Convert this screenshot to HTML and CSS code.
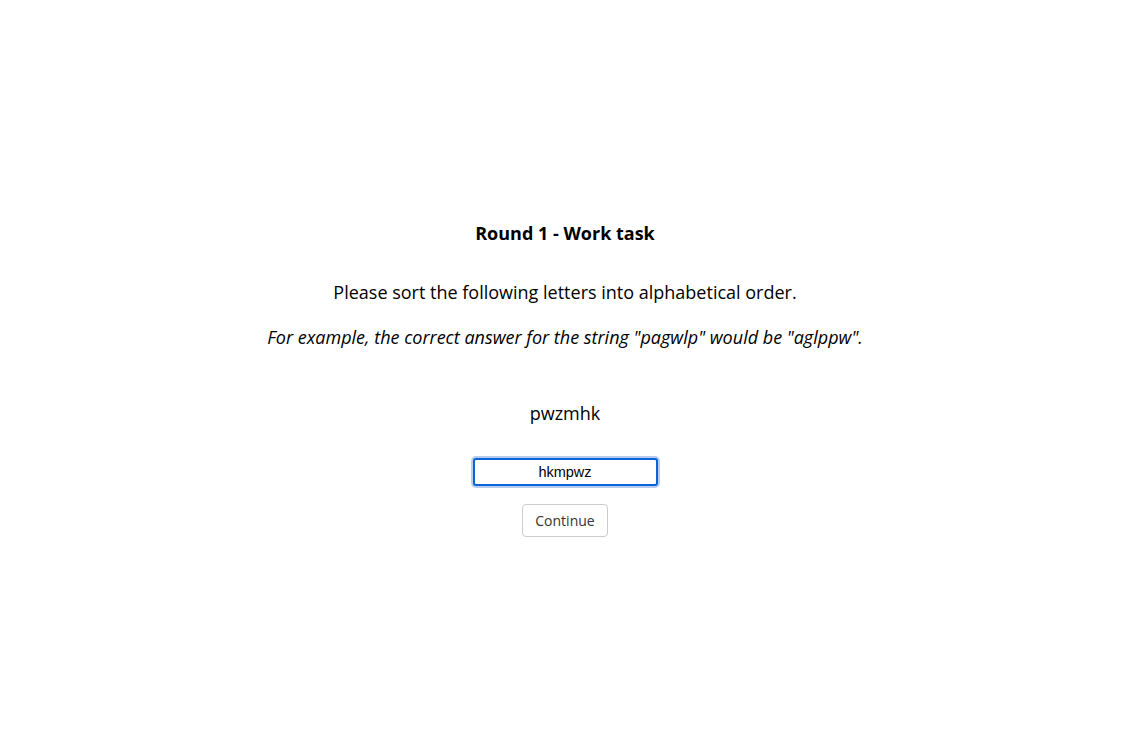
FILE: index.html
```html
<!DOCTYPE html>
<html lang="en">
<head>
<meta charset="utf-8">
<title>Round 1 - Work task</title>
<link rel="stylesheet" href="styles.css">
</head>
<body>
<div class="wrapper">
  <div class="content">
    <p class="title">Round 1 - Work task</p>
    <p class="instr">Please sort the following letters into alphabetical order.</p>
    <p class="example">For example, the correct answer for the string "pagwlp" would be "aglppw".</p>
    <p class="stim">pwzmhk</p>
    <input class="answer" type="text" value="hkmpwz">
    <button class="btn" type="button">Continue</button>
  </div>
</div>
</body>
</html>
```
FILE: styles.css
```css
html, body {
  margin: 0;
  padding: 0;
  height: 100%;
  background: #fff;
}
body {
  font-family: "Open Sans", Arial, sans-serif;
  font-size: 18px;
  color: #000;
}
.wrapper {
  height: 100%;
  display: flex;
  align-items: center;
  justify-content: center;
  box-sizing: border-box;
  padding-top: 13px;
  padding-right: 7px;
}
.content {
  display: flex;
  flex-direction: column;
  align-items: center;
  text-align: center;
}
.content p {
  margin: 0;
  line-height: 28px;
}
.title {
  font-weight: 700;
  margin-bottom: 31px !important;
}
.instr {
  margin-bottom: 17px !important;
}
.example {
  font-style: italic;
  margin-bottom: 48px !important;
}
.stim {
  margin-bottom: 31px !important;
}
.answer {
  box-sizing: border-box;
  width: 185px;
  height: 28px;
  border: 2px solid #0b63d6;
  border-radius: 3px;
  box-shadow: 0 0 0 2px #b7cdf0;
  outline: none;
  text-align: center;
  font-family: Arial, "Liberation Sans", sans-serif;
  font-size: 14.5px;
  color: #000;
  padding: 0 4px;
  margin-bottom: 18px;
}
.btn {
  font-family: "Open Sans", Arial, sans-serif;
  font-size: 14px;
  line-height: 1.4;
  padding: 6px 12px;
  color: #333;
  background: #fff;
  border: 1px solid #ccc;
  border-radius: 4px;
  cursor: pointer;
}
```
